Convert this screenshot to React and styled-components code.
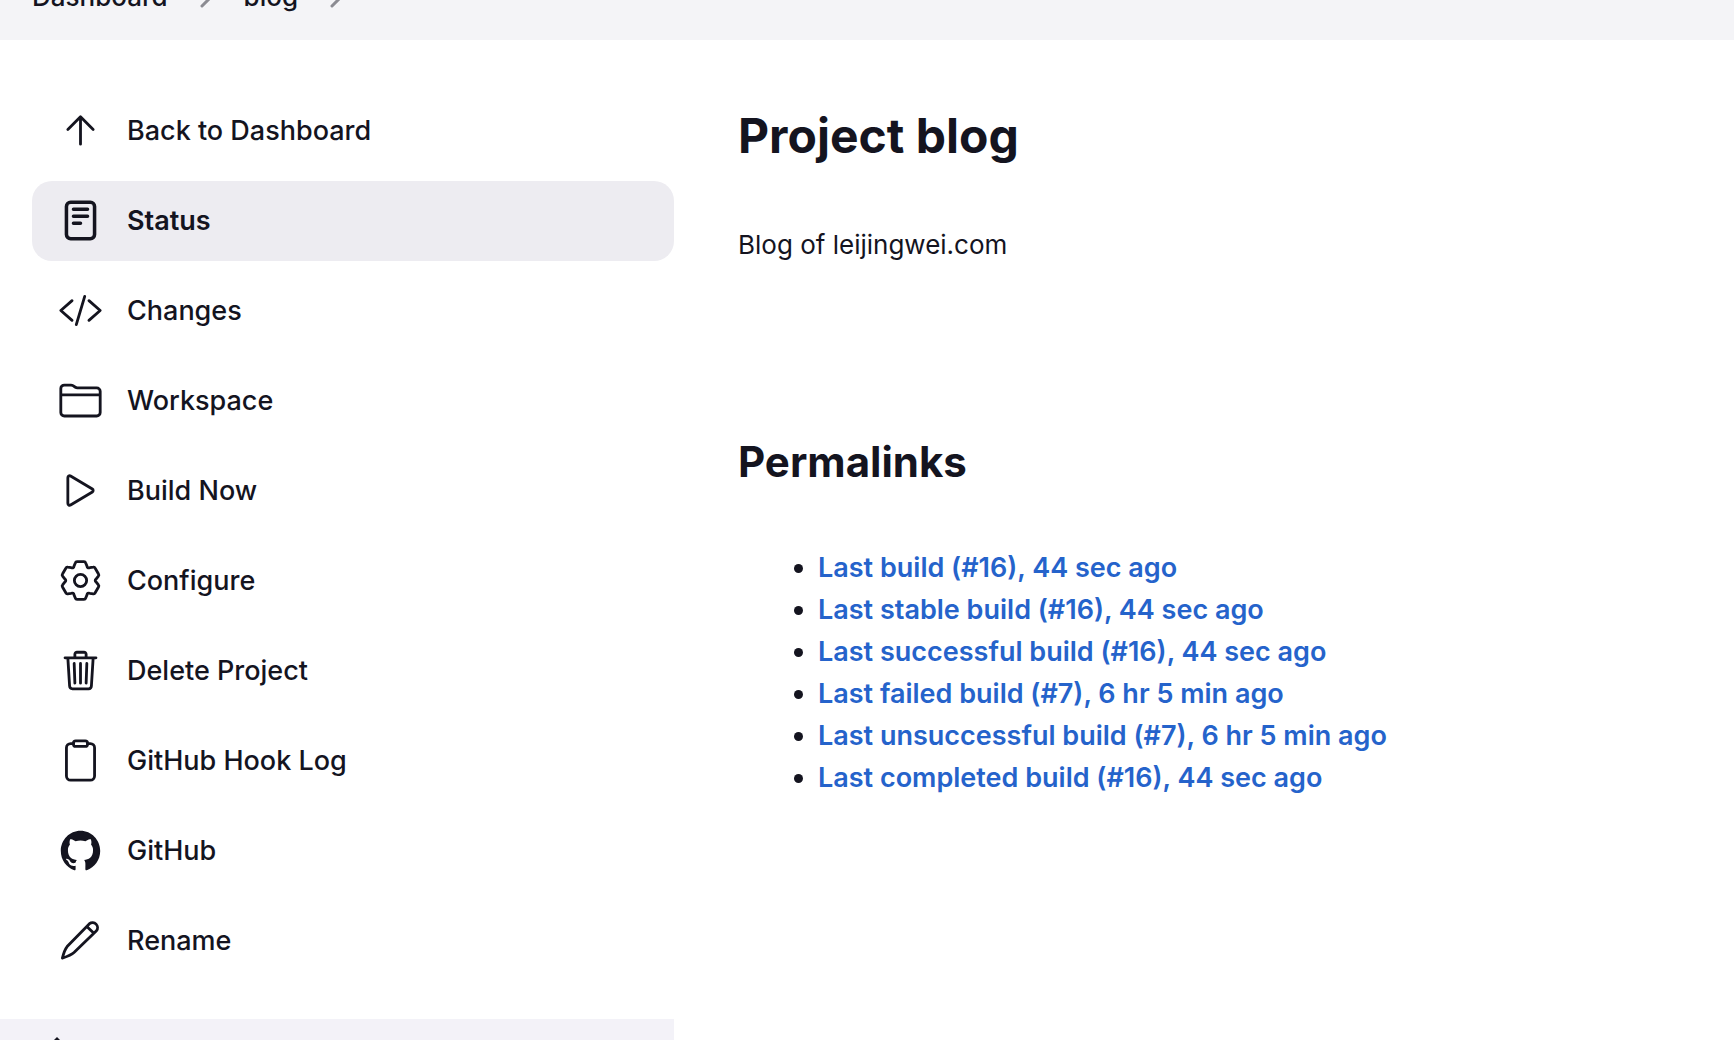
import React from "react";
import styled, { createGlobalStyle, css } from "styled-components";

const ink = "#14141f";
const linkBlue = "#2563cb";

const GlobalStyle = createGlobalStyle`
  *, *::before, *::after { box-sizing: border-box; }
  body {
    margin: 0;
    background: #fff;
    color: ${ink};
    font-family: Inter, "Liberation Sans", sans-serif;
    font-size: 27px;
    line-height: 42px;
  }
`;

const Page = styled.div`
  display: flex;
  flex-direction: column;
  height: 100vh;
  overflow: hidden;
`;

const BreadcrumbBar = styled.nav`
  flex: none;
  display: flex;
  align-items: flex-end;
  height: 40px;
  padding: 0 32px 22px;
  overflow: hidden;
  background: #f4f4f7;
`;

const Breadcrumbs = styled.ol`
  display: flex;
  align-items: center;
  margin: 0;
  padding: 0;
  list-style: none;
  font-size: 26px;
  font-weight: 500;
`;

const Crumb = styled.li`
  display: flex;
  align-items: center;
`;

const CrumbLink = styled.a`
  color: inherit;
  text-decoration: none;
`;

const CrumbChevron = styled.svg`
  width: 24px;
  height: 24px;
  margin: 0 26px;
  fill: none;
  stroke: #8b8b92;
  stroke-width: 3;
  stroke-linecap: round;
  stroke-linejoin: round;
`;

const Body = styled.div`
  flex: 1;
  display: grid;
  grid-template-columns: 674px 1fr;
  min-height: 0;
`;

const Sidebar = styled.aside`
  display: flex;
  flex-direction: column;
  min-height: 0;
`;

const Tasks = styled.nav`
  flex: none;
  display: flex;
  flex-direction: column;
  gap: 10px;
  padding: 51px 0 38px 32px;
`;

const TaskLink = styled.a`
  display: flex;
  align-items: center;
  gap: 24px;
  height: 80px;
  padding: 0 26px;
  border-radius: 20px;
  color: inherit;
  font-weight: 500;
  text-decoration: none;
  ${(p) =>
    p.$active &&
    css`
      background: #edecf1;
      font-weight: 600;
    `}
`;

const TaskIcon = styled.svg`
  flex: none;
  width: 45px;
  height: 45px;
  margin-bottom: 2px;
  overflow: visible;
  fill: none;
  stroke: currentColor;
  stroke-width: ${(p) => (p.$active ? 40 : 32)};
  stroke-linecap: round;
  stroke-linejoin: round;
`;

const BuildHistory = styled.section`
  flex: 1 0 0;
  min-height: 0;
  padding: 18px 44px;
  overflow: hidden;
  background: #f3f2f8;
`;

const TrendIcon = styled.svg`
  display: block;
  width: 26px;
  height: 26px;
  fill: ${ink};
`;

const Main = styled.main`
  padding: 64px;
`;

const Title = styled.h1`
  margin: 0;
  font-size: 48px;
  line-height: 64px;
  font-weight: 700;
`;

const Description = styled.p`
  margin: 56px 0 0;
  font-size: 26px;
`;

const SectionTitle = styled.h2`
  margin: 166px 0 0;
  font-size: 42px;
  line-height: 60px;
  font-weight: 700;
`;

const Permalinks = styled.ul`
  margin: 55px 0 0;
  padding-left: 80px;
`;

const PermalinkAnchor = styled.a`
  color: ${linkBlue};
  font-weight: 600;
  text-decoration: none;
`;

const gearPath = (() => {
  const at = (deg, r) => {
    const a = (deg * Math.PI) / 180;
    return `${(256 + r * Math.sin(a)).toFixed(1)} ${(256 - r * Math.cos(a)).toFixed(1)}`;
  };
  let d = `M${at(-10, 218)}`;
  for (let t = 0; t < 360; t += 60) {
    d += `L${at(t + 10, 218)}Q${at(t + 14, 222)} ${at(t + 16, 210)}`;
    d += `L${at(t + 24, 180)}Q${at(t + 30, 156)} ${at(t + 36, 180)}`;
    d += `L${at(t + 44, 210)}Q${at(t + 46, 222)} ${at(t + 50, 218)}`;
  }
  return d + "Z";
})();

const tasks = [
  {
    label: "Back to Dashboard",
    icon: <path d="M112 244L256 100l144 144M256 120v292" />,
  },
  {
    label: "Status",
    active: true,
    icon: (
      <>
        <rect x="96" y="48" width="320" height="416" rx="48" />
        <path d="M176 128h160M176 208h160M176 288h80" />
      </>
    ),
  },
  {
    label: "Changes",
    icon: <path d="M160 368L32 256l128-112M352 368l128-112-128-112M304 96l-96 320" />,
  },
  {
    label: "Workspace",
    icon: (
      <path d="M440 432H72a40 40 0 01-40-40V120a40 40 0 0140-40h75.89a40 40 0 0122.19 6.72l27.84 18.56a40 40 0 0022.19 6.72H440a40 40 0 0140 40v240a40 40 0 01-40 40zM32 192h448" />
    ),
  },
  {
    label: "Build Now",
    icon: (
      <path d="M112 111v290c0 17.44 17 28.52 31 20.16l247.9-148.37c12.12-7.25 12.12-26.33 0-33.58L143 90.84c-14-8.36-31 2.72-31 20.16z" />
    ),
  },
  {
    label: "Configure",
    icon: (
      <>
        <path d={gearPath} />
        <circle cx="256" cy="256" r="70" />
      </>
    ),
  },
  {
    label: "Delete Project",
    icon: (
      <path d="M112 112l20 320c.95 18.49 14.4 32 32 32h184c17.67 0 30.87-13.51 32-32l20-320M80 112h352M192 112V72a23.93 23.93 0 0124-24h80a23.93 23.93 0 0124 24v40M256 176v224M184 176l8 224M328 176l-8 224" />
    ),
  },
  {
    label: "GitHub Hook Log",
    icon: (
      <>
        <path d="M336 64h32a48 48 0 0148 48v320a48 48 0 01-48 48H144a48 48 0 01-48-48V112a48 48 0 0148-48h32" />
        <rect x="176" y="32" width="160" height="64" rx="26" />
      </>
    ),
  },
  {
    label: "GitHub",
    icon: (
      <path
        fill="currentColor"
        stroke="none"
        d="M256 32C132.3 32 32 134.9 32 261.7c0 101.5 64.2 187.5 153.2 217.9a17.56 17.56 0 003.8.4c8.3 0 11.5-6.1 11.5-11.4 0-5.5-.2-19.9-.3-39.1a102.4 102.4 0 01-22.6 2.7c-43.1 0-52.9-33.5-52.9-33.5-10.2-26.5-24.9-33.6-24.9-33.6-19.5-13.7-.1-14.1 1.4-14.1h.1c22.5 2 34.3 23.8 34.3 23.8 11.2 19.6 26.2 25.1 39.6 25.1a63 63 0 0025.6-6c2-14.8 7.8-24.9 14.2-30.7-49.7-5.8-102-25.5-102-113.5 0-25.1 8.7-45.6 23-61.6-2.3-5.8-10-29.2 2.2-60.8a18.64 18.64 0 015-.5c8.1 0 26.4 3.1 56.6 24.1a208.21 208.21 0 01112.2 0c30.2-21 48.5-24.1 56.6-24.1a18.64 18.64 0 015 .5c12.2 31.6 4.5 55 2.2 60.8 14.3 16.1 23 36.6 23 61.6 0 88.2-52.4 107.6-102.3 113.3 8 7.1 15.2 21.1 15.2 42.5 0 30.7-.3 55.5-.3 63 0 5.4 3.1 11.5 11.4 11.5a19.35 19.35 0 004-.4C415.9 449.2 480 363.1 480 261.7 480 134.9 379.7 32 256 32z"
      />
    ),
  },
  {
    label: "Rename",
    icon: (
      <path d="M50 457C60 415 72 365 104 325L358 65A57 57 0 01438 145L182 393C146 425 100 440 50 457ZM328 96L408 174" />
    ),
  },
];

const permalinks = [
  "Last build (#16), 44 sec ago",
  "Last stable build (#16), 44 sec ago",
  "Last successful build (#16), 44 sec ago",
  "Last failed build (#7), 6 hr 5 min ago",
  "Last unsuccessful build (#7), 6 hr 5 min ago",
  "Last completed build (#16), 44 sec ago",
];

export default function App() {
  return (
    <>
      <GlobalStyle />
      <Page>
        <BreadcrumbBar aria-label="Breadcrumb">
          <Breadcrumbs>
            {["Dashboard", "blog"].map((name) => (
              <Crumb key={name}>
                <CrumbLink href="#">{name}</CrumbLink>
                <CrumbChevron viewBox="0 0 24 24" aria-hidden="true">
                  <path d="M8 3l9 9-9 9" />
                </CrumbChevron>
              </Crumb>
            ))}
          </Breadcrumbs>
        </BreadcrumbBar>
        <Body>
          <Sidebar>
            <Tasks aria-label="Project tasks">
              {tasks.map(({ label, icon, active }) => (
                <TaskLink
                  key={label}
                  href="#"
                  $active={active}
                  aria-current={active ? "page" : undefined}
                >
                  <TaskIcon viewBox="0 0 512 512" $active={active} aria-hidden="true">
                    {icon}
                  </TaskIcon>
                  <span>{label}</span>
                </TaskLink>
              ))}
            </Tasks>
            <BuildHistory>
              <TrendIcon viewBox="0 0 26 26" aria-hidden="true">
                <path d="M13 0l3 3 10 12H0L10 3z" />
              </TrendIcon>
            </BuildHistory>
          </Sidebar>
          <Main>
            <Title>Project blog</Title>
            <Description>Blog of leijingwei.com</Description>
            <SectionTitle>Permalinks</SectionTitle>
            <Permalinks>
              {permalinks.map((text) => (
                <li key={text}>
                  <PermalinkAnchor href="#">{text}</PermalinkAnchor>
                </li>
              ))}
            </Permalinks>
          </Main>
        </Body>
      </Page>
    </>
  );
}
